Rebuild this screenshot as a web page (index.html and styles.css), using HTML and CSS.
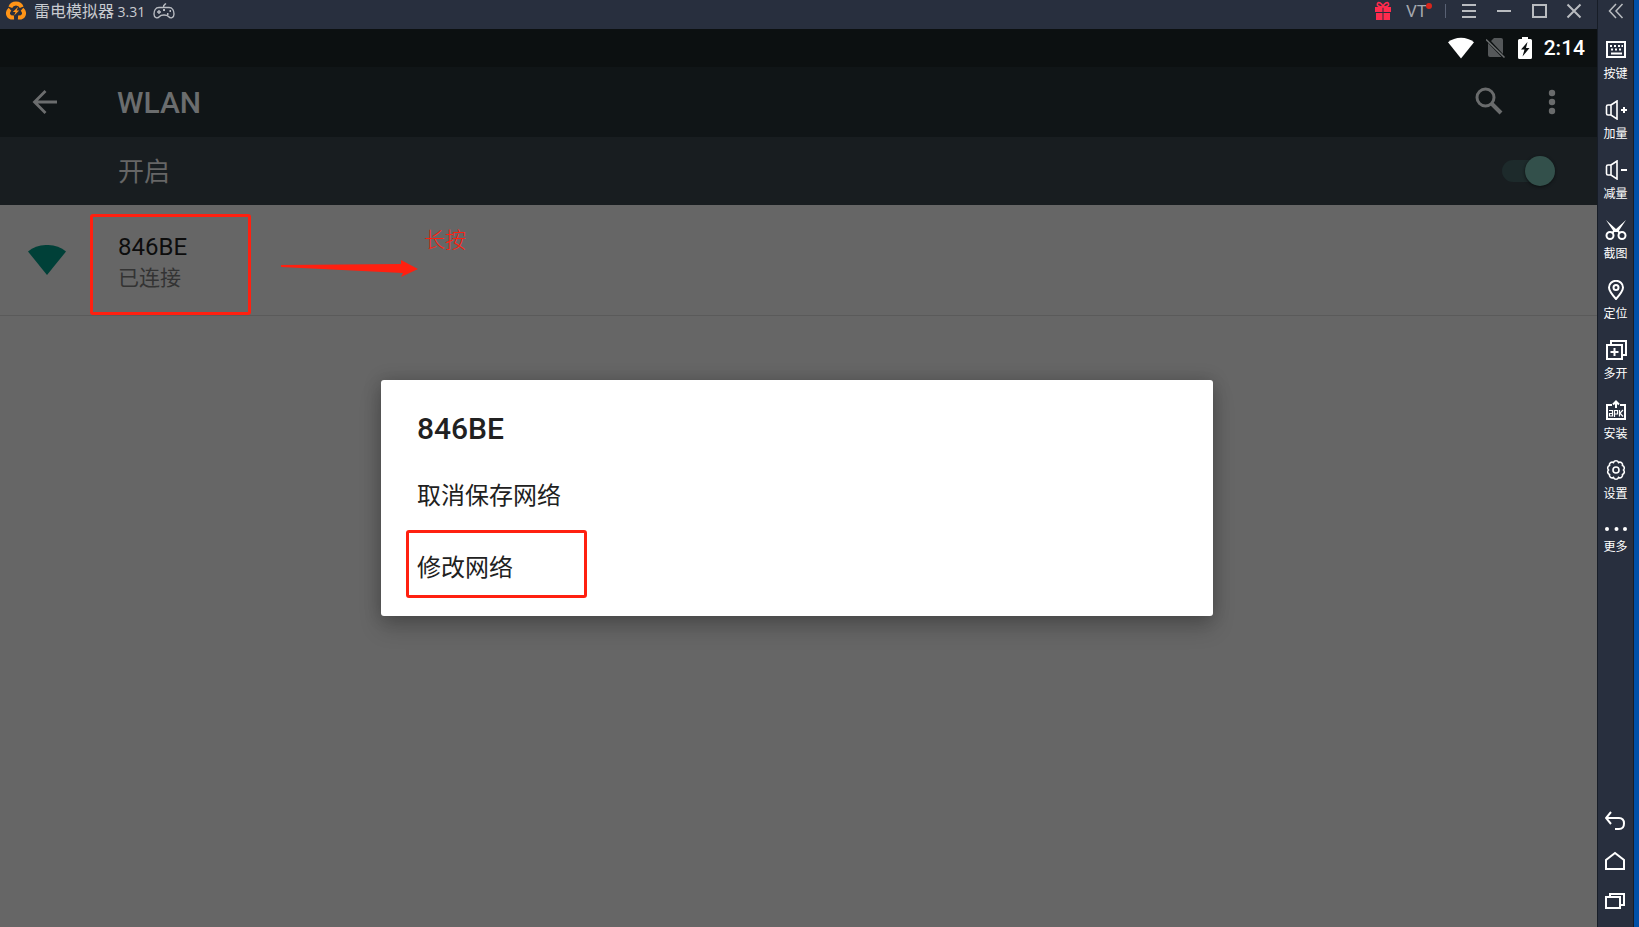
FILE: index.html
```html
<!DOCTYPE html>
<html lang="zh-CN">
<head>
<meta charset="utf-8">
<title>雷电模拟器</title>
<link rel="stylesheet" href="styles.css">
</head>
<body>
<div class="window">
  <div class="main">
    <header class="titlebar">
      <svg class="logo" width="20" height="20" viewBox="0 0 20 20"><g fill="none" stroke="#ff9417" stroke-width="4"><path d="M4.300 6.200C5.500 3.200 7.500 2.400 10 2.400s4.500.800 5.700 3.800"/><path d="M4 8.200C.8 11 1 17 8 16.600"/><path d="M16 8.200c3.200 2.800 3 8.800-4 8.400"/></g><path d="M12.200 5.800 6.800 11h2.700l-1.300 3.600 5-5h-2.600z" fill="#ff9417"/></svg>
      <h1 class="app-name">雷电模拟器 <span class="version">3.31</span></h1>
      <svg width="24" height="18" viewBox="0 0 24 18" fill="none" stroke="#b9bcc2" stroke-width="1.400"><path d="M7 5.500h10c3.500 0 5 3.500 5 6.500 0 4-3.500 5-5.500 2.500-1.500-2-7.500-2-9 0C5.500 17 2 16 2 12c0-3 1.500-6.500 5-6.500zM11.500 5.500C11 3 13 2.500 14 1.500M5 10h4M7 8v4"/><path d="M15 12h1.500M17.500 9H19M11 8h2" stroke-width="2"/></svg>
      <div class="title-tools">
        <button class="gift" aria-label="礼物"><svg width="18" height="20" viewBox="0 0 18 20"><path d="M1 6h7.500v5H1zM9.500 6H17v5H9.500zM2 12h6.500v7H2zM9.500 12H16v7H9.500z" fill="#ff2b4d"/><path d="M9 6C5 6 2.500 4.500 3.500 2.500S8 2 9 6c1-4 4.500-5.500 5.500-3.500S13 6 9 6z" fill="none" stroke="#ff2b4d" stroke-width="1.600"/></svg></button>
        <button class="vt">VT<i class="dot"></i></button>
        <span class="divider"></span>
        <button class="win-btn" aria-label="菜单"><svg width="16" height="16" viewBox="0 0 16 16"><path d="M1 2h14M1 8h14M1 14h14"/></svg></button>
        <button class="win-btn" aria-label="最小化"><svg width="16" height="16" viewBox="0 0 16 16"><path d="M1 8h14"/></svg></button>
        <button class="win-btn" aria-label="最大化"><svg width="16" height="16" viewBox="0 0 16 16"><path d="M2 2h13v12H2z"/></svg></button>
        <button class="win-btn" aria-label="关闭"><svg width="16" height="16" viewBox="0 0 16 16"><path d="m1.500 1.500 13 13m0-13-13 13"/></svg></button>
      </div>
    </header>

    <main class="device">
      <div class="statusbar">
        <svg width="26" height="22" viewBox="0 0 26 22"><path d="M13 21.500 0 5.200C7-.8 19-.8 26 5.200z" fill="#fff"/></svg>
        <svg width="20" height="22" viewBox="0 0 20 22"><path d="M8 1h7q2 0 2 2v14L5 4zM2 6l13.500 14H4q-2 0-2-2z" fill="#55585a"/><path d="m0 2.500 18.500 18" stroke="#6d7071" stroke-width="1.600"/></svg>
        <svg width="14" height="22" viewBox="0 0 14 22"><path d="M4 0h6v2h2.500Q14 2 14 3.500v17q0 1.500-1.500 1.500h-11Q0 22 0 20.500v-17Q0 2 1.500 2H4z" fill="#fff"/><path d="M9.500 5 3 12.500h3.500L4.500 19.500 11.500 11H8z" fill="#0c1011"/></svg>
        <time class="clock">2:14</time>
      </div>
      <div class="toolbar">
        <button class="back" aria-label="返回"><svg width="26" height="26" viewBox="0 0 26 26" fill="none" stroke="#6b6d6e" stroke-width="2.800"><path d="M25 13H3M13.500 2 2.500 13l11 11"/></svg></button>
        <h2 class="page-title">WLAN</h2>
        <button class="search" aria-label="搜索"><svg width="28" height="28" viewBox="0 0 28 28" fill="none" stroke="#696b6c"><circle cx="10.500" cy="10.500" r="8.500" stroke-width="3"/><path d="m16.500 16.500 9.500 9.500" stroke-width="4"/></svg></button>
        <button class="overflow" aria-label="更多选项"><svg width="8" height="26" viewBox="0 0 8 26" fill="#696b6c"><circle cx="4" cy="4" r="3.200"/><circle cx="4" cy="13" r="3.200"/><circle cx="4" cy="22" r="3.200"/></svg></button>
      </div>
      <div class="switchbar">
        <label for="wlan-switch">开启</label>
        <input id="wlan-switch" class="switch" type="checkbox" role="switch" checked>
      </div>
      <div class="network">
        <svg class="signal" width="38" height="30" viewBox="0 0 38 30"><path d="M19 30 0 6.500C10-2.200 28-2.200 38 6.500z" fill="#004038"/></svg>
        <div class="network-text">
          <div class="ssid">846BE</div>
          <div class="state">已连接</div>
        </div>
        <div class="mark mark-network"></div>
        <svg class="arrow" width="138" height="20" viewBox="0 0 138 20"><path d="M1 6 121 5 121 1l17 9-17 8 2-4L1 8z" fill="#ff2010"/></svg>
        <span class="hint">长按</span>
      </div>
      <div class="overlay">
        <section class="dialog" role="dialog" aria-labelledby="dialog-title">
          <h3 id="dialog-title">846BE</h3>
          <button class="option">取消保存网络</button>
          <button class="option">修改网络<span class="mark mark-option"></span></button>
        </section>
      </div>
    </main>
  </div>

  <aside class="sidebar">
    <button class="collapse" aria-label="收起"><svg width="16" height="16" viewBox="0 0 16 16"><path d="M8 1 1.500 8 8 15M14.500 1 8 8l6.500 7"/></svg></button>
    <button class="tool"><svg width="22" height="20" viewBox="0 0 22 20"><path d="M2 2h18v15H2z"/><path d="M5 6h2m2 0h2m2 0h2m1.500 0h1.500M6 9.500h2m2 0h2m2 0h2M6 13.500h11"/></svg>按键</button>
    <button class="tool"><svg width="22" height="20" viewBox="0 0 22 20"><path d="M6 5 12 1v18l-6-4H3q-1.500 0-1.500-1.500v-7Q1.500 5 3 5zM6 5v10" stroke-width="1.600"/><path d="M16 10h6m-3-3v6"/></svg>加量</button>
    <button class="tool"><svg width="22" height="20" viewBox="0 0 22 20"><path d="M6 5 12 1v18l-6-4H3q-1.500 0-1.500-1.500v-7Q1.500 5 3 5zM6 5v10" stroke-width="1.600"/><path d="M16 10h6"/></svg>减量</button>
    <button class="tool"><svg width="22" height="20" viewBox="0 0 22 20"><path d="M1 0 11 9 21 0 13 12h-4z" fill="#fff" stroke="none"/><path d="m9.500 10-2 3m5-3 2 3"/><circle cx="5" cy="15.500" r="3.500"/><circle cx="17" cy="15.500" r="3.500"/></svg>截图</button>
    <button class="tool"><svg width="22" height="20" viewBox="0 0 22 20"><path d="M11 19C7 14.500 4 11 4 7.500a7 6.700 0 0 1 14 0C18 11 15 14.500 11 19z"/><circle cx="11" cy="7.500" r="2.500"/></svg>定位</button>
    <button class="tool"><svg width="22" height="20" viewBox="0 0 22 20"><path d="M2 5h15v14H2zM6 5V1h15v14h-4M9.500 8v8m-4-4h8"/></svg>多开</button>
    <button class="tool"><svg width="22" height="20" viewBox="0 0 22 20"><path d="M7 5H2v14h18V5h-5M11 8V2M8 4.500 11 1.500l3 3"/><path d="M4 10.500h3.500v5.500H4.500v-2.500h3M9.500 17v-6.500h3v3.500h-3M14.500 10v6.500m3.500-6.500-3 3.200 3 3.300" stroke-width="1.200"/></svg>安装</button>
    <button class="tool"><svg width="22" height="20" viewBox="0 0 22 20"><path d="M8.500 2.500a2.700 2.700 0 0 1 5 0 2.700 2.700 0 0 1 4 3 2.700 2.700 0 0 1 1 4.500 2.700 2.700 0 0 1-1 4.500 2.700 2.700 0 0 1-4 3 2.700 2.700 0 0 1-5 0 2.700 2.700 0 0 1-4-3 2.700 2.700 0 0 1-1-4.500 2.700 2.700 0 0 1 1-4.500 2.700 2.700 0 0 1 4-3z" stroke-width="1.600"/><circle cx="11" cy="10" r="3" stroke-width="1.600"/></svg>设置</button>
    <button class="tool more"><svg width="22" height="18" viewBox="0 0 22 18"><g fill="#fff" stroke="none"><circle cx="2" cy="9" r="2"/><circle cx="11.500" cy="9" r="2"/><circle cx="20" cy="9" r="2"/></g></svg>更多</button>
    <nav class="nav-keys">
      <button aria-label="返回键"><svg width="22" height="20" viewBox="0 0 22 20"><path d="M6 1 1 7l5 6M1 7h13q5 0 5 5.500T14 18h-4"/></svg></button>
      <button aria-label="主页键"><svg width="22" height="20" viewBox="0 0 22 20"><path d="M1 18V9l9-7 9 7v9z"/></svg></button>
      <button aria-label="任务键"><svg width="22" height="20" viewBox="0 0 22 20"><path d="M1 6h14v11H1zM5 6V3h14v11h-4"/></svg></button>
    </nav>
  </aside>
</div>
</body>
</html>
```
FILE: styles.css
```css
* { box-sizing: border-box; }

body {
  margin: 0;
  background: #0050a8;
  font-family: Roboto, "Noto Sans CJK SC", sans-serif;
}

h1, h2, h3 { margin: 0; }

button {
  padding: 0;
  border: 0;
  background: none;
  color: inherit;
  font: inherit;
  display: flex;
  align-items: center;
  justify-content: center;
}

svg { display: block; flex: none; }

.window {
  display: flex;
  min-height: 100vh;
  padding-right: 5px;
}

.main {
  flex: 1;
  display: flex;
  flex-direction: column;
}

/* Emulator title bar */
.titlebar {
  display: flex;
  align-items: center;
  height: 29px;
  padding: 0 6px 7px;
  background: #282f3e;
  color: #c8cbd0;
}

.app-name {
  margin: 0 7px 0 8px;
  font: 400 16px/20px "Noto Sans CJK SC", sans-serif;
}

.version { font: 14px/20px "Open Sans", sans-serif; }

.title-tools {
  display: flex;
  align-items: center;
  margin-left: auto;
}

.gift { margin-right: 14px; }

.vt {
  position: relative;
  width: 26px;
  justify-content: flex-start;
  color: #a5a8ae;
  font-size: 17px;
  line-height: 20px;
}

.dot {
  position: absolute;
  top: 2px;
  right: 0;
  width: 6px;
  height: 6px;
  border-radius: 50%;
  background: #d9261c;
}

.divider {
  width: 1px;
  height: 14px;
  margin: 0 5px 0 13px;
  background: #596174;
}

.win-btn { width: 35px; height: 22px; }

.win-btn svg, .collapse svg {
  fill: none;
  stroke: #b9bcc0;
  stroke-width: 2;
}

.collapse svg { stroke-width: 1.5; }

/* Android screen */
.device {
  position: relative;
  flex: 1;
  background: #666;
}

.statusbar {
  display: flex;
  align-items: center;
  justify-content: flex-end;
  gap: 12px;
  height: 38px;
  padding-right: 12px;
  background: #0c1011;
  color: #fff;
}

.clock { font-size: 21px; font-weight: 500; }

.toolbar {
  display: flex;
  align-items: center;
  height: 70px;
  padding: 0 41px 0 32px;
  background: #101517;
  color: #6b6d6e;
}

.page-title {
  flex: 1;
  margin-left: 59px;
  font-size: 30px;
  font-weight: 500;
}

.search { margin-right: 45px; padding-bottom: 2px; }

.switchbar {
  display: flex;
  align-items: center;
  justify-content: space-between;
  height: 68px;
  padding: 0 42px 0 118px;
  background: #181d20;
  color: #666;
  font-size: 26px;
}

.switchbar label { padding-bottom: 3px; }

.switch {
  appearance: none;
  display: flex;
  align-items: center;
  justify-content: flex-end;
  width: 53px;
  height: 22px;
  margin: 0;
  border-radius: 11px;
  background: #1d2a2b;
}

.switch::before {
  content: "";
  flex: none;
  width: 30px;
  height: 30px;
  border-radius: 50%;
  background: #33504b;
  box-shadow: 0 1px 3px #0c1011;
}

.network {
  position: relative;
  display: flex;
  align-items: center;
  height: 111px;
  padding-left: 28px;
  border-bottom: 1px solid #5a5a5a;
}

.network-text { margin-left: 52px; padding-top: 6px; }

.ssid {
  color: #0d0d0d;
  font-size: 24px;
  line-height: 30px;
}

.state {
  color: #333;
  font-size: 21px;
  line-height: 32px;
}

/* Red annotations */
.mark {
  position: absolute;
  border: 3px solid #ff2010;
  border-radius: 3px;
}

.mark-network {
  top: 9px;
  left: 90px;
  width: 161px;
  height: 101px;
}

.mark-option {
  top: 1px;
  left: 25px;
  width: 181px;
  height: 68px;
}

.arrow {
  position: absolute;
  top: 54px;
  left: 280px;
}

.hint {
  position: absolute;
  top: 20px;
  left: 424px;
  color: #ff2010;
  font-size: 21px;
  font-weight: 300;
  line-height: 30px;
}

.overlay {
  position: absolute;
  inset: 40px 3px 0 0;
  display: flex;
  align-items: center;
  justify-content: center;
}

.dialog {
  width: 52.2%;
  padding: 31px 0 15px;
  border-radius: 3px;
  background: #fff;
  box-shadow: 0 12px 22px rgba(0, 0, 0, 0.2), 0 0 18px rgba(0, 0, 0, 0.2);
  color: #212121;
}

.dialog h3 {
  padding: 0 36px 10px;
  font-size: 30px;
  font-weight: 500;
  line-height: 36px;
}

.option {
  position: relative;
  justify-content: flex-start;
  width: 100%;
  height: 72px;
  padding: 0 36px;
  font-size: 24px;
}

/* Emulator side tools */
.sidebar {
  display: flex;
  flex-direction: column;
  width: 37px;
  padding-bottom: 16px;
  border: solid #171d27;
  border-width: 0 1px;
  background: #282f3e;
  color: #fff;
}

.collapse { height: 22px; margin-bottom: 18px; }

.tool {
  flex-direction: column;
  justify-content: flex-start;
  gap: 6px;
  height: 60px;
  font-size: 12px;
  line-height: 16px;
}

.more { gap: 1px; }

.tool svg, .nav-keys svg {
  fill: none;
  stroke: #fff;
  stroke-width: 2;
}

.nav-keys {
  display: flex;
  flex-direction: column;
  align-items: center;
  gap: 20px;
  margin-top: auto;
}
```
